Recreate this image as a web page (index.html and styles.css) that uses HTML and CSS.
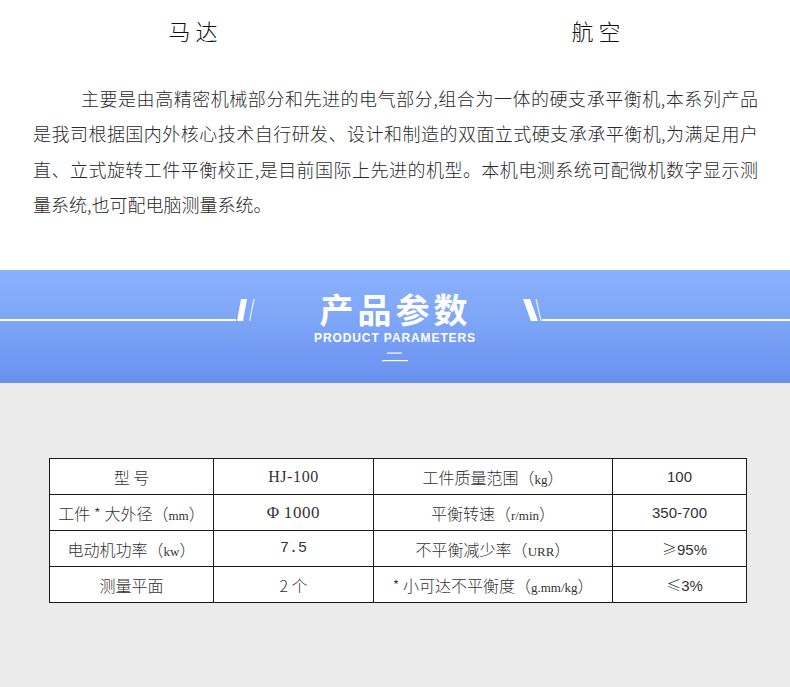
FILE: index.html
```html
<!DOCTYPE html>
<html lang="zh-CN">
<head>
<meta charset="utf-8">
<title>产品参数</title>
<link rel="stylesheet" href="styles.css">
</head>
<body>
<section class="intro">
  <div class="heads">
    <div class="head">马达</div>
    <div class="head">航空</div>
  </div>
  <div class="para">
    <div class="ln first">主要是由高精密机械部分和先进的电气部分,组合为一体的硬支承平衡机,本系列产品</div>
    <div class="ln">是我司根据国内外核心技术自行研发、设计和制造的双面立式硬支承承平衡机,为满足用户</div>
    <div class="ln">直、立式旋转工件平衡校正,是目前国际上先进的机型。本机电测系统可配微机数字显示测</div>
    <div class="ln last">量系统,也可配电脑测量系统。</div>
  </div>
</section>

<section class="banner">
  <div class="title-row">
    <div class="side side-left">
      <span class="line"></span>
      <svg class="slash" width="20" height="22" viewBox="0 0 20 22"><polygon points="5,0 11,0 7,22 1,22" fill="#fff"/><line x1="18" y1="0" x2="13.5" y2="22" stroke="#fff" stroke-width="1"/></svg>
    </div>
    <div class="mid"><h2 class="title">产品参数</h2></div>
    <div class="side side-right">
      <svg class="slash" width="20" height="22" viewBox="0 0 20 22"><polygon points="1,0 8,0 16,22 9,22" fill="#fff"/><line x1="14" y1="0" x2="19" y2="22" stroke="#fff" stroke-width="1"/></svg>
      <span class="line"></span>
    </div>
  </div>
  <div class="subtitle">PRODUCT PARAMETERS</div>
  <svg class="mark" width="26" height="10" viewBox="0 0 26 10"><rect x="5" y="0.5" width="15" height="1.2" fill="#fff"/><rect x="0" y="8" width="26" height="1.2" fill="#fff"/></svg>
</section>

<section class="params">
  <table class="spec">
    <colgroup>
      <col class="c1"><col class="c2"><col class="c3"><col class="c4">
    </colgroup>
    <tr>
      <td>型&nbsp;号</td>
      <td class="serif">HJ-100</td>
      <td>工件质量范围（<span class="unit">kg</span>）</td>
      <td class="sans">100</td>
    </tr>
    <tr>
      <td>工件 * 大外径（<span class="unit">mm</span>）</td>
      <td class="serif big">Φ&#8201;1000</td>
      <td>平衡转速（<span class="unit">r/min</span>）</td>
      <td class="sans">350-700</td>
    </tr>
    <tr>
      <td>电动机功率（<span class="unit">kw</span>）</td>
      <td class="mono">7.5</td>
      <td>不平衡减少率（<span class="unit">URR</span>）</td>
      <td class="sans pad"><span class="cjk">≥</span>95%</td>
    </tr>
    <tr>
      <td>测量平面</td>
      <td>2 个</td>
      <td>* 小可达不平衡度（<span class="unit">g.mm/kg</span>）</td>
      <td class="sans pad"><span class="cjk">≤</span>3%</td>
    </tr>
  </table>
</section>
</body>
</html>
```

FILE: styles.css
```css
html, body {
  margin: 0;
  padding: 0;
}
body {
  width: 790px;
  height: 687px;
  background: #ebebeb;
  font-family: "Noto Sans CJK SC", "Noto Sans", sans-serif;
  color: #2a2a2a;
  overflow: hidden;
}

.intro {
  background: #fff;
  height: 270px;
  box-sizing: border-box;
  padding-top: 14px;
}
.heads {
  display: grid;
  grid-template-columns: 386px 386px;
  column-gap: 17px;
}
.head {
  text-align: center;
  font-size: 22px;
  line-height: 32px;
  letter-spacing: 5px;
  padding-left: 5px;
  font-weight: 300;
  color: #111;
}

.para {
  margin: 35px 32px 0 33px;
  font-size: 18px;
  line-height: 35.3px;
  color: #2a2a2a;
  font-weight: 300;
}
.ln {
  text-align: justify;
  text-align-last: justify;
  white-space: nowrap;
}
.ln.first {
  padding-left: 48px;
}
.ln.last {
  text-align-last: left;
}

.banner {
  height: 113px;
  box-sizing: border-box;
  padding-top: 24px;
  background: linear-gradient(180deg, #89b1fb 0%, #7ea6f7 45%, #6a90f0 100%);
  display: flex;
  flex-direction: column;
  align-items: center;
}
.title-row {
  display: flex;
  width: 100%;
  align-items: flex-end;
}
.side {
  display: flex;
  align-items: flex-end;
}
.side-left {
  flex: 0 0 256px;
}
.side-right {
  flex: 1 1 auto;
}
.line {
  flex: 1 1 auto;
  height: 2px;
  background: #fff;
}
.slash {
  display: block;
  flex: 0 0 20px;
}
.mid {
  flex: 0 0 266px;
  display: flex;
  justify-content: center;
  padding-left: 13px;
  box-sizing: border-box;
}
.title {
  margin: 0 0 -3px 0;
  font-size: 34px;
  line-height: 30px;
  font-weight: 700;
  letter-spacing: 4px;
  color: #fff;
}
.subtitle {
  margin-top: 10px;
  font-family: "Liberation Sans", Arial, sans-serif;
  font-size: 12px;
  line-height: 14px;
  font-weight: 700;
  letter-spacing: 0.9px;
  color: #fff;
}
.mark {
  display: block;
  margin-top: 7px;
}

.params {
  padding-top: 75px;
}
.spec {
  margin-left: 49px;
  width: 697px;
  border-collapse: collapse;
  table-layout: fixed;
  background: #fff;
}
.c1 { width: 164px; }
.c2 { width: 160px; }
.c3 { width: 239px; }
.c4 { width: 134px; }
.spec td {
  border: 1px solid #1a1a1a;
  height: 35px;
  padding: 0;
  text-align: center;
  vertical-align: middle;
  font-size: 16px;
  font-weight: 300;
  color: #333;
  white-space: nowrap;
}
.unit {
  font-family: "Liberation Serif", serif;
  font-size: 13px;
}
.spec td.serif {
  font-family: "Liberation Serif", serif;
  font-size: 16px;
  letter-spacing: 0.6px;
}
.spec td.serif.big {
  font-size: 17px;
  letter-spacing: 0.6px;
}
.spec td.sans {
  font-family: "Liberation Sans", "Noto Sans CJK SC", sans-serif;
  font-size: 15px;
}
.spec td.mono {
  font-family: "Liberation Mono", monospace;
  font-size: 15px;
}
.spec td.pad {
  padding-left: 10px;
}
.cjk {
  font-family: "Noto Sans CJK SC", sans-serif;
  font-size: 15px;
}
```
